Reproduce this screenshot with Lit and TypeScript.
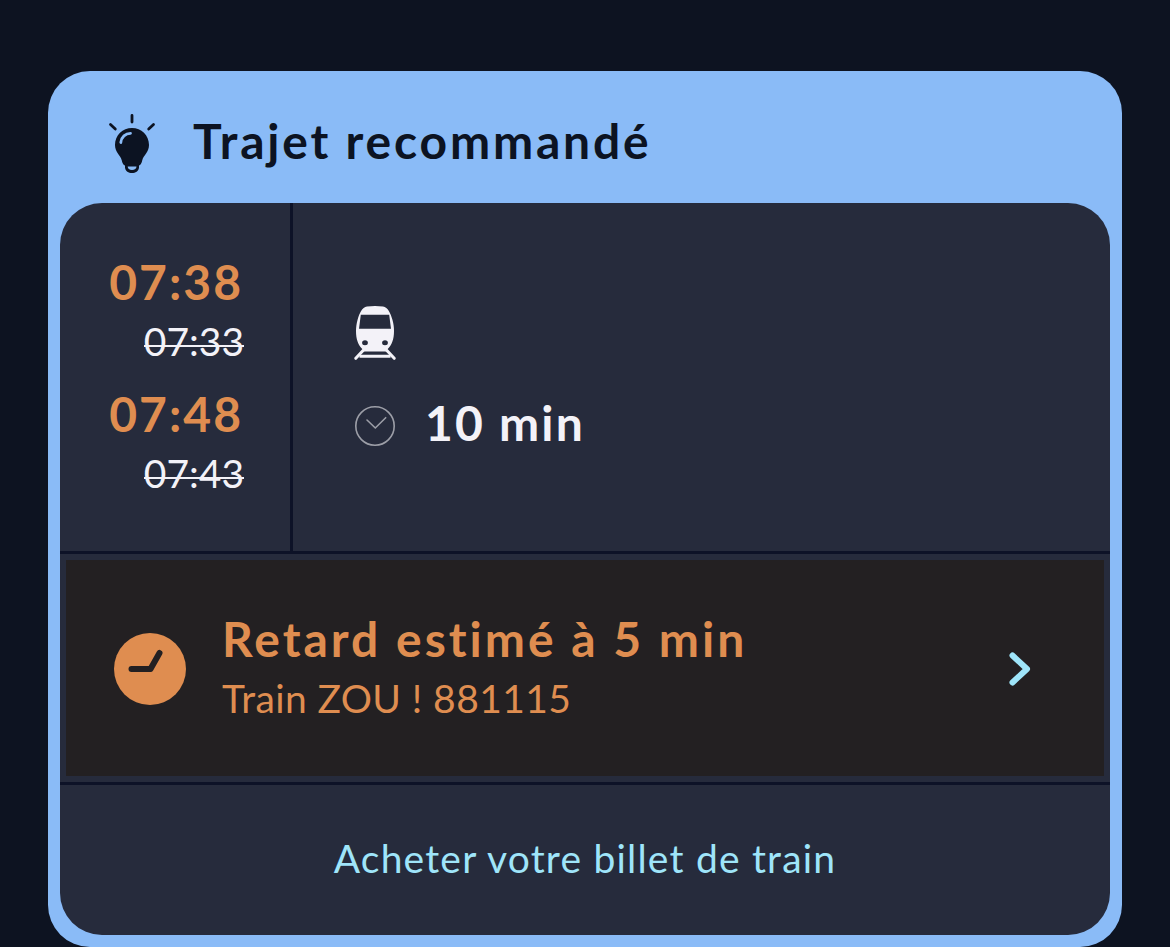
import { css, html, LitElement, svg } from 'lit';
import { customElement, property } from 'lit/decorators.js';

const bulbIcon = svg`
  <path d="M24 1.5V8M2.500 10.500L7.300 15M45.500 10.500L40.700 15" fill="none" stroke="#0c1322" stroke-width="2.800" stroke-linecap="round"/>
  <path d="M24 14C33.300 14 41 21 41 31C41 38.500 35.500 41 34.200 46.500C33.800 49 32.500 51.300 31 51.500V53.500C30.500 57.500 27.500 59 24 59C20.500 59 17.500 57.500 17 53.500V51.500C15.500 51.300 14.200 49 13.800 46.500C12.500 41 7 38.500 7 31C7 21 14.700 14 24 14Z" fill="#0c1322"/>
  <path d="M19.700 52.500H28.500C28.500 54.800 26.700 56 24 56C21.300 56 19.700 54.800 19.700 52.500Z" fill="#8abbf7"/>
  <path d="M12.800 28.500C13.300 23 17.500 19.400 22.500 19.300" fill="none" stroke="#8abbf7" stroke-width="2.800" stroke-linecap="round"/>
`;

const trainIcon = svg`
  <path fill-rule="evenodd" fill="#f3f2f8" d="M13 0.500Q21 -0.300 29 0.500C34 1.500 36.500 7 38.500 14C39.500 18 40 21 40 25C40 33 38 39 33.500 43.200H8.500C4 39 2 33 2 25C2 21 2.500 18 3.500 14C5.500 7 8 1.500 13 0.500ZM6.800 8.700L5 22.700H37L35.200 8.700ZM11 34.200A2.900 2.500 0 1 0 11 39.200A2.900 2.500 0 1 0 11 34.200ZM31 34.200A2.900 2.500 0 1 0 31 39.200A2.900 2.500 0 1 0 31 34.200Z"/>
  <path d="M10.500 43L1.800 52.300M31.500 43L40.200 52.300" fill="none" stroke="#f3f2f8" stroke-width="3" stroke-linecap="round"/>
  <path d="M9 44H33M5.500 50.300H36.500" fill="none" stroke="#f3f2f8" stroke-width="3"/>
`;

@customElement('journey-time')
export class JourneyTime extends LitElement {
  @property({type: String}) estimated = '';

  @property({type: String}) planned = '';

  static styles = css`
    :host {
      display: block;
      text-align: right;
    }
    .estimated {
      padding-right: 1px;
      font-size: 48px;
      line-height: 58px;
      font-weight: 700;
      letter-spacing: 2px;
      color: #df8d50;
    }
    .planned {
      font-size: 39px;
      line-height: 60px;
      color: #f3f2f8;
    }
    /* the strike sits lower than the font's own line-through */
    .planned s {
      display: inline-block;
      text-decoration: none;
      background: linear-gradient(#f3f2f8, #f3f2f8) 0 34px / 100% 2px no-repeat;
    }
  `;

  render() {
    return html`
      <div class="estimated">${this.estimated}</div>
      <div class="planned"><s>${this.planned}</s></div>
    `;
  }
}

@customElement('app-root')
export class AppRoot extends LitElement {
  static styles = css`
    :host {
      display: block;
      box-sizing: border-box;
      height: 947px;
      padding: 71px 48px 0;
      overflow: hidden;
      background: #0d1321;
      font-family: Lato, 'Liberation Sans', sans-serif;
      white-space: nowrap;
    }
    svg {
      display: block;
      flex: none;
    }
    .card {
      box-sizing: border-box;
      height: 876px;
      padding: 0 12px 12px;
      border-radius: 42px;
      background: #8abbf7;
    }
    .header {
      box-sizing: border-box;
      display: flex;
      align-items: flex-start;
      gap: 37px;
      height: 132px;
      padding: 40px 48px 0;
      color: #0c1322;
    }
    .header svg {
      margin-top: 3px;
    }
    .title {
      font-size: 48px;
      line-height: 60px;
      font-weight: 700;
      letter-spacing: 2.8px;
    }
    .panel {
      height: 732px;
      border-radius: 42px;
      overflow: hidden;
      background: #262b3c;
    }
    .journey {
      display: flex;
      height: 348px;
      border-bottom: 3px solid #0d1227;
    }
    .times {
      box-sizing: border-box;
      display: flex;
      flex-direction: column;
      gap: 14px;
      width: 233px;
      padding: 50px 46px 0 0;
      border-right: 3px solid #0d1227;
    }
    .details {
      padding: 103px 0 0 61px;
    }
    .duration {
      display: flex;
      align-items: center;
      gap: 29px;
      margin-top: 33px;
      font-size: 48px;
      line-height: 60px;
      font-weight: 700;
      letter-spacing: 2.2px;
      color: #f3f2f8;
    }
    .duration svg {
      margin-top: 6px;
    }
    .alert {
      box-sizing: border-box;
      display: flex;
      align-items: center;
      height: 228px;
      padding: 1px 72px 0 48px;
      border: 6px solid #262b3c;
      background: #232022;
      color: #df8d50;
    }
    .message {
      flex: 1;
      padding-left: 36px;
    }
    .delay {
      font-size: 48px;
      line-height: 58px;
      font-weight: 700;
      letter-spacing: 3px;
    }
    .train {
      font-size: 39px;
      line-height: 60px;
      letter-spacing: 0.4px;
    }
    .buy {
      box-sizing: border-box;
      display: flex;
      align-items: center;
      justify-content: center;
      height: 153px;
      padding-bottom: 4px;
      border-top: 3px solid #0d1227;
      font-size: 39px;
      letter-spacing: 1.2px;
      color: #9fe5fa;
    }
  `;

  render() {
    return html`
      <div class="card">
        <div class="header">
          <svg width="48" height="60" viewBox="0 0 48 60">${bulbIcon}</svg>
          <div class="title">Trajet recommandé</div>
        </div>
        <div class="panel">
          <div class="journey">
            <div class="times">
              <journey-time estimated="07:38" planned="07:33"></journey-time>
              <journey-time estimated="07:48" planned="07:43"></journey-time>
            </div>
            <div class="details">
              <svg width="42" height="54" viewBox="0 0 42 54">${trainIcon}</svg>
              <div class="duration">
                <svg width="42" height="42" viewBox="0 0 42 42" fill="none" stroke="#9c9ea7" stroke-width="1.6">
                  <circle cx="21" cy="21" r="19.2"/>
                  <path d="M13 15L21.300 23L31.700 12.700" stroke-linecap="round"/>
                </svg>
                <span>10 min</span>
              </div>
            </div>
          </div>
          <div class="alert">
            <svg width="72" height="72" viewBox="0 0 72 72">
              <circle cx="36" cy="36" r="36" fill="#df8d50"/>
              <path d="M17.500 36H36.500L45.500 20" fill="none" stroke="#232022" stroke-width="6" stroke-linecap="round" stroke-linejoin="round"/>
            </svg>
            <div class="message">
              <div class="delay">Retard estimé à 5 min</div>
              <div class="train">Train ZOU ! 881115</div>
            </div>
            <svg width="24" height="36" viewBox="0 0 24 36" fill="none" stroke="#9fe5fa" stroke-width="6" stroke-linecap="round" stroke-linejoin="round">
              <path d="M4.500 4.500L19 18L4.500 31.500"/>
            </svg>
          </div>
          <div class="buy">Acheter votre billet de train</div>
        </div>
      </div>
    `;
  }
}
